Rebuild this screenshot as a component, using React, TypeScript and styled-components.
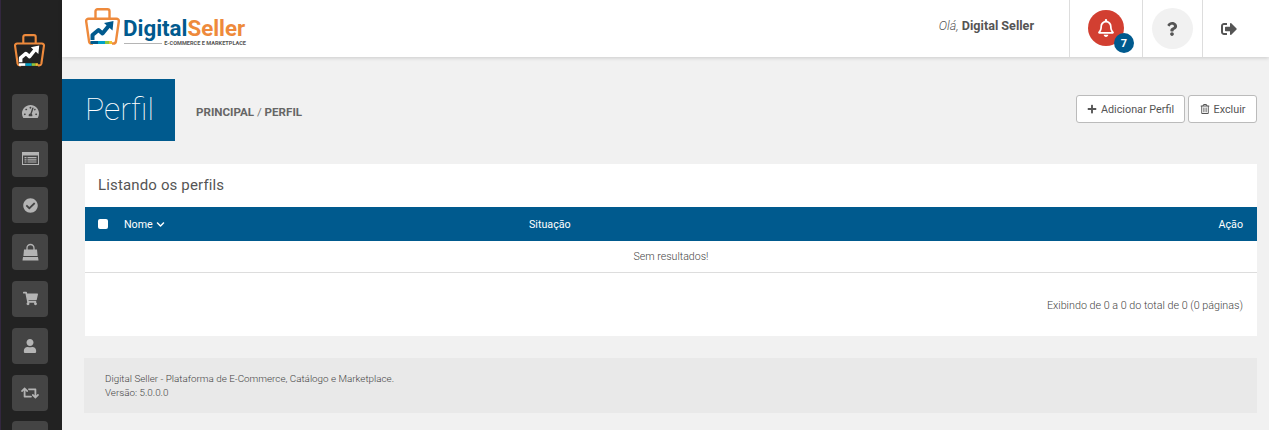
import styled, { createGlobalStyle } from "styled-components";
import {
  FaCheckCircle,
  FaChevronDown,
  FaPlus,
  FaQuestion,
  FaRegBell,
  FaRegTrashAlt,
  FaRetweet,
  FaShoppingCart,
  FaSignOutAlt,
  FaTachometerAlt,
  FaUser,
} from "react-icons/fa";

const GlobalStyle = createGlobalStyle`
  html, body {
    margin: 0;
    height: 100%;
    overflow: hidden;
    background: #f1f1f1;
    font-family: Roboto, "Liberation Sans", sans-serif;
  }
`;

const Shell = styled.div`
  display: flex;
  height: 430px;
  overflow: hidden;
`;

const Sidebar = styled.aside`
  flex: 0 0 62px;
  box-sizing: border-box;
  height: 430px;
  background: #222222;
  border-left: 1px solid #33273f;
  padding-top: 34px;
  display: flex;
  flex-direction: column;
  align-items: center;
  overflow: hidden;
`;

const SideLogo = styled.div`
  width: 31px;
  height: 33px;
  margin: 0 4px 27px 0;
  svg {
    display: block;
    width: 100%;
    height: 100%;
  }
`;

const SideList = styled.nav`
  display: flex;
  flex-direction: column;
  gap: 10.8px;
  margin-right: 3px;
`;

const SideItem = styled.a`
  flex: 0 0 36px;
  width: 36px;
  height: 36px;
  border-radius: 4px;
  background: #444444;
  color: #b4b4b4;
  display: flex;
  align-items: center;
  justify-content: center;
`;

const Main = styled.div`
  flex: 1;
  min-width: 0;
`;

const Header = styled.header`
  height: 57px;
  background: #ffffff;
  box-shadow: 0 1px 4px rgba(0, 0, 0, 0.16);
  display: flex;
  align-items: stretch;
  position: relative;
`;

const Brand = styled.div`
  flex: 1;
  display: flex;
  align-items: flex-start;
  padding: 8px 0 0 23px;
`;

const BrandMark = styled.div`
  width: 35px;
  height: 37px;
  svg {
    display: block;
    width: 100%;
    height: 100%;
  }
`;

const BrandText = styled.div`
  width: 122px;
  margin: 9px 0 0 4px;
  display: flex;
  flex-direction: column;
`;

const BrandName = styled.div`
  font-size: 22.3px;
  line-height: 23px;
  font-weight: 700;
  white-space: nowrap;
  margin-left: -1px;
  color: #005a8e;
  span {
    color: #ee8a3c;
  }
`;

const BrandTag = styled.div`
  display: flex;
  align-items: center;
  gap: 2px;
  font-size: 5.6px;
  line-height: 7px;
  font-weight: 700;
  color: #555555;
  white-space: nowrap;
  &::before {
    content: "";
    flex: 1;
    height: 1px;
    background: #b5b5b5;
  }
`;

const Greeting = styled.div`
  margin: 18px 35px 0 0;
  font-size: 12.6px;
  line-height: 16px;
  color: #555555;
  white-space: nowrap;
  em {
    font-weight: 300;
  }
  strong {
    font-weight: 700;
  }
`;

const HeaderCell = styled.div<{ $width: number }>`
  flex: 0 0 ${(p) => p.$width}px;
  box-sizing: border-box;
  border-left: 1px solid #dddddd;
  display: flex;
  align-items: center;
  justify-content: center;
  position: relative;
`;

const BellCircle = styled.div`
  width: 36px;
  height: 36px;
  border-radius: 50%;
  background: #d23f31;
  color: #ffffff;
  font-size: 18px;
  display: flex;
  align-items: center;
  justify-content: center;
  margin: 0 1px 1px 0;
`;

const Badge = styled.span`
  position: absolute;
  left: 44px;
  top: 33px;
  width: 20px;
  height: 20px;
  border-radius: 50%;
  background: #005a8e;
  color: #ffffff;
  font-size: 11px;
  font-weight: 700;
  display: flex;
  align-items: center;
  justify-content: center;
`;

const HelpCircle = styled.div`
  width: 41px;
  height: 41px;
  border-radius: 50%;
  background: #f1f1f1;
  color: #555555;
  font-size: 14px;
  display: flex;
  align-items: center;
  justify-content: center;
  margin-right: 1px;
`;

const LogoutIcon = styled.div`
  color: #555555;
  font-size: 16px;
  display: flex;
  margin-right: 15px;
`;

const PageHead = styled.div`
  margin-top: 22px;
  display: flex;
  align-items: center;
  padding-right: 12px;
`;

const TitleBlock = styled.h1`
  margin: 0;
  width: 113px;
  height: 62px;
  box-sizing: border-box;
  padding-left: 23px;
  background: #005a8e;
  color: #ffffff;
  font-size: 32px;
  font-weight: 100;
  line-height: 61px;
`;

const Breadcrumb = styled.div`
  flex: 1;
  margin: 3px 0 0 21px;
  font-size: 11.6px;
  color: #777777;
  text-transform: uppercase;
  strong {
    font-weight: 700;
    color: #666666;
  }
`;

const Actions = styled.div`
  display: flex;
  gap: 3px;
  margin-top: -2px;
`;

const ActionButton = styled.button<{ $width: number }>`
  width: ${(p) => p.$width}px;
  height: 28px;
  box-sizing: border-box;
  padding: 0;
  border: 1px solid #bbbbbb;
  border-radius: 3px;
  background: #ffffff;
  color: #555555;
  font-family: inherit;
  font-size: 10.8px;
  display: flex;
  align-items: center;
  justify-content: center;
  gap: 4px;
  svg {
    font-size: 10px;
  }
`;

const Card = styled.section`
  margin: 23px 12px 0 23px;
  height: 172px;
  background: #ffffff;
  display: flex;
  flex-direction: column;
`;

const CardTitle = styled.h2`
  margin: 0;
  height: 43px;
  box-sizing: border-box;
  padding: 12px 0 0 13px;
  font-size: 15px;
  line-height: 18px;
  font-weight: 400;
  letter-spacing: 0.15px;
  color: #555555;
`;

const TableHead = styled.div`
  height: 34px;
  background: #005a8e;
  color: #ffffff;
  font-size: 10.7px;
  display: grid;
  grid-template-columns: 431px 1fr auto;
  align-items: center;
  padding: 0 14px 0 13px;
`;

const NameColumn = styled.div`
  display: flex;
  align-items: center;
`;

const CheckBox = styled.span`
  width: 10px;
  height: 10px;
  border-radius: 2px;
  background: #ffffff;
  margin-right: 16px;
`;

const SortIcon = styled.span`
  display: flex;
  font-size: 9px;
  margin-left: 3px;
`;

const EmptyRow = styled.div`
  height: 31px;
  border-bottom: 1px solid #dddddd;
  font-size: 10.6px;
  font-weight: 300;
  color: #444444;
  display: flex;
  align-items: center;
  justify-content: center;
`;

const Summary = styled.div`
  padding: 26px 14px 0 0;
  text-align: right;
  font-size: 10.75px;
  line-height: 14px;
  font-weight: 300;
  color: #444444;
`;

const Footer = styled.footer`
  margin: 22px 12px 0 22px;
  height: 55px;
  box-sizing: border-box;
  padding: 14px 0 0 21px;
  background: #e9e9e9;
  font-size: 9.85px;
  line-height: 14px;
  font-weight: 300;
  color: #444444;
`;

const WindowListIcon = () => (
  <svg width="17" height="13" viewBox="0 0 17 13" fill="currentColor">
    <path
      fillRule="evenodd"
      d="M0 0h17v13H0zM1 3.5V12h15V3.5z"
    />
    <path d="M2.5 5h2v1.2h-2zM5.5 5h9v1.2h-9zM2.5 7.2h2v1.2h-2zM5.5 7.2h9v1.2h-9zM2.5 9.4h2v1.2h-2zM5.5 9.4h9v1.2h-9z" />
  </svg>
);

const BagIcon = () => (
  <svg width="17" height="18" viewBox="0 0 17 18" fill="currentColor">
    <path d="M2 6.5h13l.6 6.5H1.400z" />
    <path d="M1 14h15l.5 3.500H.5z" />
    <path d="M5 7V5a3.500 3.500 0 0 1 7 0v2" fill="none" stroke="currentColor" strokeWidth="1.300" />
  </svg>
);

const LogoMark = ({ arrow, tail }: { arrow: string; tail: string }) => (
  <svg viewBox="0 0 35 37" fill="none">
    <path
      d="M10.500 10.500V3.200a2 2 0 0 1 2-2h10a2 2 0 0 1 2 2v7.300"
      stroke="#ee8a3c"
      strokeWidth="2.400"
    />
    <path
      d="M8 35.500h-1.500a2.500 2.500 0 0 1-2.400-1.900L1.200 13.500a2.400 2.400 0 0 1 2.400-2.800h27.800a2.400 2.400 0 0 1 2.400 2.800l-2.900 20.100a2.500 2.500 0 0 1-2.400 1.900H27"
      stroke="#ee8a3c"
      strokeWidth="2.400"
    />
    <path
      d="M7.500 32v-5l6-5 4 3.500 6.500-8"
      stroke={arrow}
      strokeWidth="4"
      strokeLinejoin="round"
    />
    <path d="M19 15l9.500-2-1 9.500z" fill={arrow} />
    <path d="M5.500 34.500H13" stroke={tail} strokeWidth="3" />
    <path d="M13 34.500h7" stroke="#00a0c6" strokeWidth="3" />
    <path d="M20 34.500h4" stroke="#8cc63f" strokeWidth="3" />
    <path d="M24 34.500h3" stroke="#f2c230" strokeWidth="3" />
  </svg>
);

const App = () => {
  return (
    <Shell>
      <GlobalStyle />
      <Sidebar>
        <SideLogo>
          <LogoMark arrow="#ffffff" tail="#ffffff" />
        </SideLogo>
        <SideList>
          <SideItem><FaTachometerAlt size={17} /></SideItem>
          <SideItem><WindowListIcon /></SideItem>
          <SideItem><FaCheckCircle size={15} /></SideItem>
          <SideItem><BagIcon /></SideItem>
          <SideItem><FaShoppingCart size={15} /></SideItem>
          <SideItem><FaUser size={14} /></SideItem>
          <SideItem><FaRetweet size={18} /></SideItem>
          <SideItem />
        </SideList>
      </Sidebar>
      <Main>
        <Header>
          <Brand>
            <BrandMark>
              <LogoMark arrow="#005a8e" tail="#005a8e" />
            </BrandMark>
            <BrandText>
              <BrandName>
                Digital<span>Seller</span>
              </BrandName>
              <BrandTag>E-COMMERCE E MARKETPLACE</BrandTag>
            </BrandText>
          </Brand>
          <Greeting>
            <em>Olá,</em> <strong>Digital Seller</strong>
          </Greeting>
          <HeaderCell $width={73}>
            <BellCircle>
              <FaRegBell />
            </BellCircle>
            <Badge>7</Badge>
          </HeaderCell>
          <HeaderCell $width={60}>
            <HelpCircle>
              <FaQuestion />
            </HelpCircle>
          </HeaderCell>
          <HeaderCell $width={67}>
            <LogoutIcon>
              <FaSignOutAlt />
            </LogoutIcon>
          </HeaderCell>
        </Header>
        <PageHead>
          <TitleBlock>Perfil</TitleBlock>
          <Breadcrumb>
            <strong>Principal</strong> / <strong>Perfil</strong>
          </Breadcrumb>
          <Actions>
            <ActionButton $width={109}>
              <FaPlus />
              Adicionar Perfil
            </ActionButton>
            <ActionButton $width={69}>
              <FaRegTrashAlt />
              Excluir
            </ActionButton>
          </Actions>
        </PageHead>
        <Card>
          <CardTitle>Listando os perfils</CardTitle>
          <TableHead>
            <NameColumn>
              <CheckBox />
              Nome
              <SortIcon>
                <FaChevronDown />
              </SortIcon>
            </NameColumn>
            <div>Situação</div>
            <div>Ação</div>
          </TableHead>
          <EmptyRow>Sem resultados!</EmptyRow>
          <Summary>Exibindo de 0 a 0 do total de 0 (0 páginas)</Summary>
        </Card>
        <Footer>
          Digital Seller - Plataforma de E-Commerce, Catálogo e Marketplace.
          <br />
          Versão: 5.0.0.0
        </Footer>
      </Main>
    </Shell>
  );
};

export default App;
